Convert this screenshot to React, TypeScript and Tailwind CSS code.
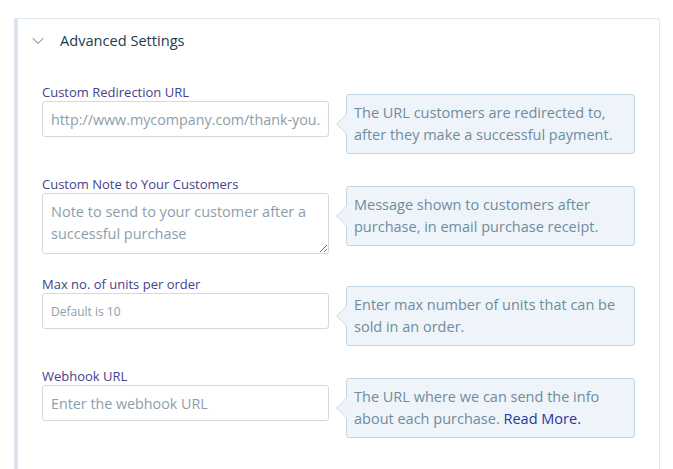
import { ChevronDown } from 'lucide-react'

type Field = {
  label: string
  placeholder: string
  help: React.ReactNode
  kind?: 'input' | 'textarea'
  small?: boolean
}

const fields: Field[] = [
  {
    label: 'Custom Redirection URL',
    placeholder: 'http://www.mycompany.com/thank-you.html',
    help: 'The URL customers are redirected to, after they make a successful payment.',
  },
  {
    label: 'Custom Note to Your Customers',
    placeholder: 'Note to send to your customer after a successful purchase',
    help: 'Message shown to customers after purchase, in email purchase receipt.',
    kind: 'textarea',
  },
  {
    label: 'Max no. of units per order',
    placeholder: 'Default is 10',
    help: 'Enter max number of units that can be sold in an order.',
    small: true,
  },
  {
    label: 'Webhook URL',
    placeholder: 'Enter the webhook URL',
    help: (
      <>
        The URL where we can send the info about each purchase.{' '}
        <a href="#" className="text-[#25399a]">
          Read More.
        </a>
      </>
    ),
  },
]

function Help({ children }: { children: React.ReactNode }) {
  return (
    <div className="relative ml-[17px] mt-[11px] w-[289px] rounded-[3px] border border-[#c2d6e3] bg-[#eef4f9] px-[7px] py-[7px] text-[14.5px] leading-[22px] text-[#6f8c9e]">
      {/* arrow */}
      <span className="absolute left-[-8px] top-1/2 h-[14px] w-[14px] -translate-y-1/2 rotate-45 border-b border-l border-[#d6e3ec] bg-[#eef4f9]" />
      <p className="relative">{children}</p>
    </div>
  )
}

export default function App() {
  return (
    <div className="min-h-[469px] bg-white pl-[14px] pt-[18px] font-['Open_Sans',sans-serif]">
      <div className="h-[451px] w-[646px] rounded-tr-[3px] border-l-4 border-r border-t border-[#dde6f1] border-l-[#dbe5f2]">
        <div className="flex h-[43px] items-center pl-[10px]">
          <ChevronDown size={20} strokeWidth={1.2} className="text-[#5f6e7b]" />
          <span className="ml-[12px] text-[14.6px] text-[#213c4e]">Advanced Settings</span>
        </div>

        <div className="flex flex-col gap-[21px] pl-[24px] pt-[21px]">
          {fields.map((f) => (
            <div key={f.label} className="flex items-start">
              <div className="w-[287px]">
                <label className="block text-[13px] leading-[18px] text-[#45438a]">{f.label}</label>
                {f.kind === 'textarea' ? (
                  <textarea
                    rows={2}
                    placeholder={f.placeholder}
                    className="block h-[61px] w-full rounded-[3px] border border-[#d4d9df] px-[8px] py-[7px] text-[14.5px] leading-[22px] placeholder:text-[#8d9eab] focus:outline-none"
                  />
                ) : (
                  <input
                    placeholder={f.placeholder}
                    className={`block h-[36px] w-full rounded-[3px] border border-[#d4d9df] pl-[8px] pr-[7px] placeholder:text-[#8d9eab] focus:outline-none ${
                      f.small ? 'text-[12px]' : 'text-[14.3px]'
                    }`}
                  />
                )}
              </div>
              <Help>{f.help}</Help>
            </div>
          ))}
        </div>
      </div>
    </div>
  )
}
